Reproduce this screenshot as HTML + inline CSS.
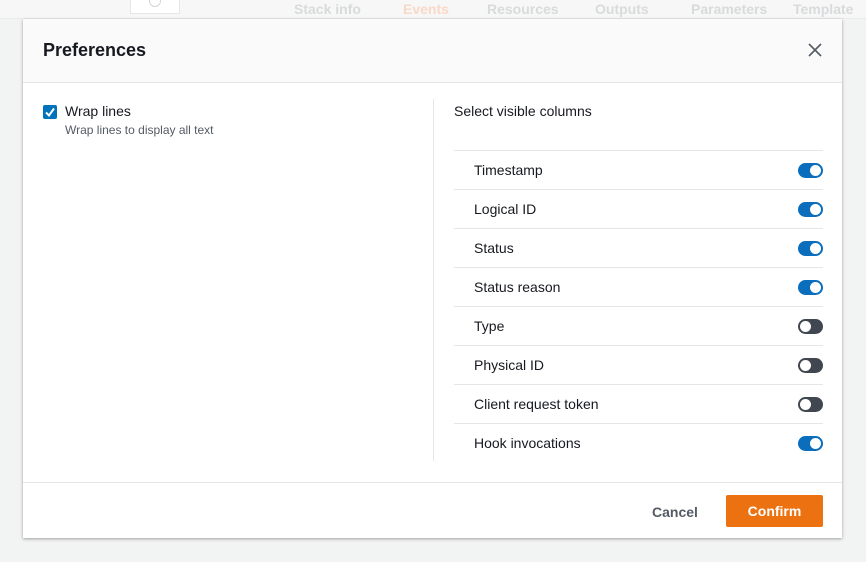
<!DOCTYPE html>
<html><head><meta charset="utf-8"><style>
*{box-sizing:border-box;margin:0;padding:0}
body{width:866px;height:562px;overflow:hidden;background:#f2f3f3;font-family:"Liberation Sans",sans-serif;position:relative;color:#16191f}
.tabs{position:absolute;top:0;left:0;width:866px;height:19px;font-size:14px;color:#d8dbdb;font-weight:bold}
.tabs span{position:absolute;top:1px}
.bgbox{position:absolute;background:#f7f7f7;border:1px solid #e6e6e6}
.modal{position:absolute;left:23px;top:19px;width:819px;height:519px;background:#fff;box-shadow:0 1px 3px rgba(0,0,0,.35)}
.hdr{height:64px;background:#fafafa;border-bottom:1px solid #e6e6e6;position:relative}
.hdr h2{position:absolute;left:20px;top:21px;font-size:18px;font-weight:bold}
.close{position:absolute;right:20px;top:24px}
.cb{position:absolute;left:20px;top:86px;width:14px;height:14px;background:#0073bb;border-radius:2px}
.t1{position:absolute;left:42px;top:84px;font-size:14px}
.t2{position:absolute;left:42px;top:104px;font-size:12px;color:#545b64}
.vdiv{position:absolute;left:410px;top:80px;width:1px;height:362px;background:#e6e6e6}
.sel{position:absolute;left:431px;top:84px;font-size:14px}
.rows{position:absolute;left:431px;top:131px;width:369px}
.row{height:39px;border-top:1px solid #e6e6e6;position:relative;font-size:14px}
.row span{position:absolute;left:20px;top:11px}
.tg{position:absolute;right:0;top:12px;width:25px;height:15px;border-radius:8px;background:#0a6ebd}
.tg::after{content:"";position:absolute;top:2px;right:2px;width:11px;height:11px;border-radius:50%;background:#fff}
.tg.off{background:#414750}
.tg.off::after{right:auto;left:2px}
.ftr{position:absolute;left:0;top:463px;width:819px;height:56px;border-top:1px solid #e6e6e6}
.cancel{position:absolute;left:629px;top:21px;font-size:14px;font-weight:bold;color:#545b64}
.confirm{position:absolute;left:703px;top:12px;width:97px;height:32px;background:#ec7211;color:#fff;border-radius:2px;font-size:14px;font-weight:bold;text-align:center;line-height:32px}
</style></head><body>
<div class="bgbox" style="left:0;top:0;width:866px;height:19px;background:#f7f7f7;border:none;border-bottom:1px solid #ebebeb"></div>
<div class="tabs"><span style="left:294px">Stack info</span><span style="left:403px;color:#f8d8c6">Events</span><span style="left:487px">Resources</span><span style="left:595px">Outputs</span><span style="left:691px">Parameters</span><span style="left:793px">Template</span></div>
<div class="bgbox" style="left:130px;top:-2px;width:50px;height:16px;background:#fff"><div style="position:absolute;left:18px;top:-4px;width:12px;height:12px;border:1px solid #d5d5d5;border-radius:50%"></div></div>
<div class="modal">
 <div class="hdr"><h2>Preferences</h2>
  <svg class="close" width="14" height="14" viewBox="0 0 14 14"><path d="M1 1L13 13M13 1L1 13" stroke="#545b64" stroke-width="1.6"/></svg></div>
 <div class="cb"><svg width="14" height="14" viewBox="0 0 14 14"><path d="M3 7.5L6 10.5L11 3.5" stroke="#fff" stroke-width="2" fill="none"/></svg></div>
 <div class="t1">Wrap lines</div>
 <div class="t2">Wrap lines to display all text</div>
 <div class="vdiv"></div>
 <div class="sel">Select visible columns</div>
 <div class="rows">
  <div class="row"><span>Timestamp</span><i class="tg"></i></div>
  <div class="row"><span>Logical ID</span><i class="tg"></i></div>
  <div class="row"><span>Status</span><i class="tg"></i></div>
  <div class="row"><span>Status reason</span><i class="tg"></i></div>
  <div class="row"><span>Type</span><i class="tg off"></i></div>
  <div class="row"><span>Physical ID</span><i class="tg off"></i></div>
  <div class="row"><span>Client request token</span><i class="tg off"></i></div>
  <div class="row"><span>Hook invocations</span><i class="tg"></i></div>
 </div>
 <div class="ftr"><div class="cancel">Cancel</div><div class="confirm">Confirm</div></div>
</div>
</body></html>
